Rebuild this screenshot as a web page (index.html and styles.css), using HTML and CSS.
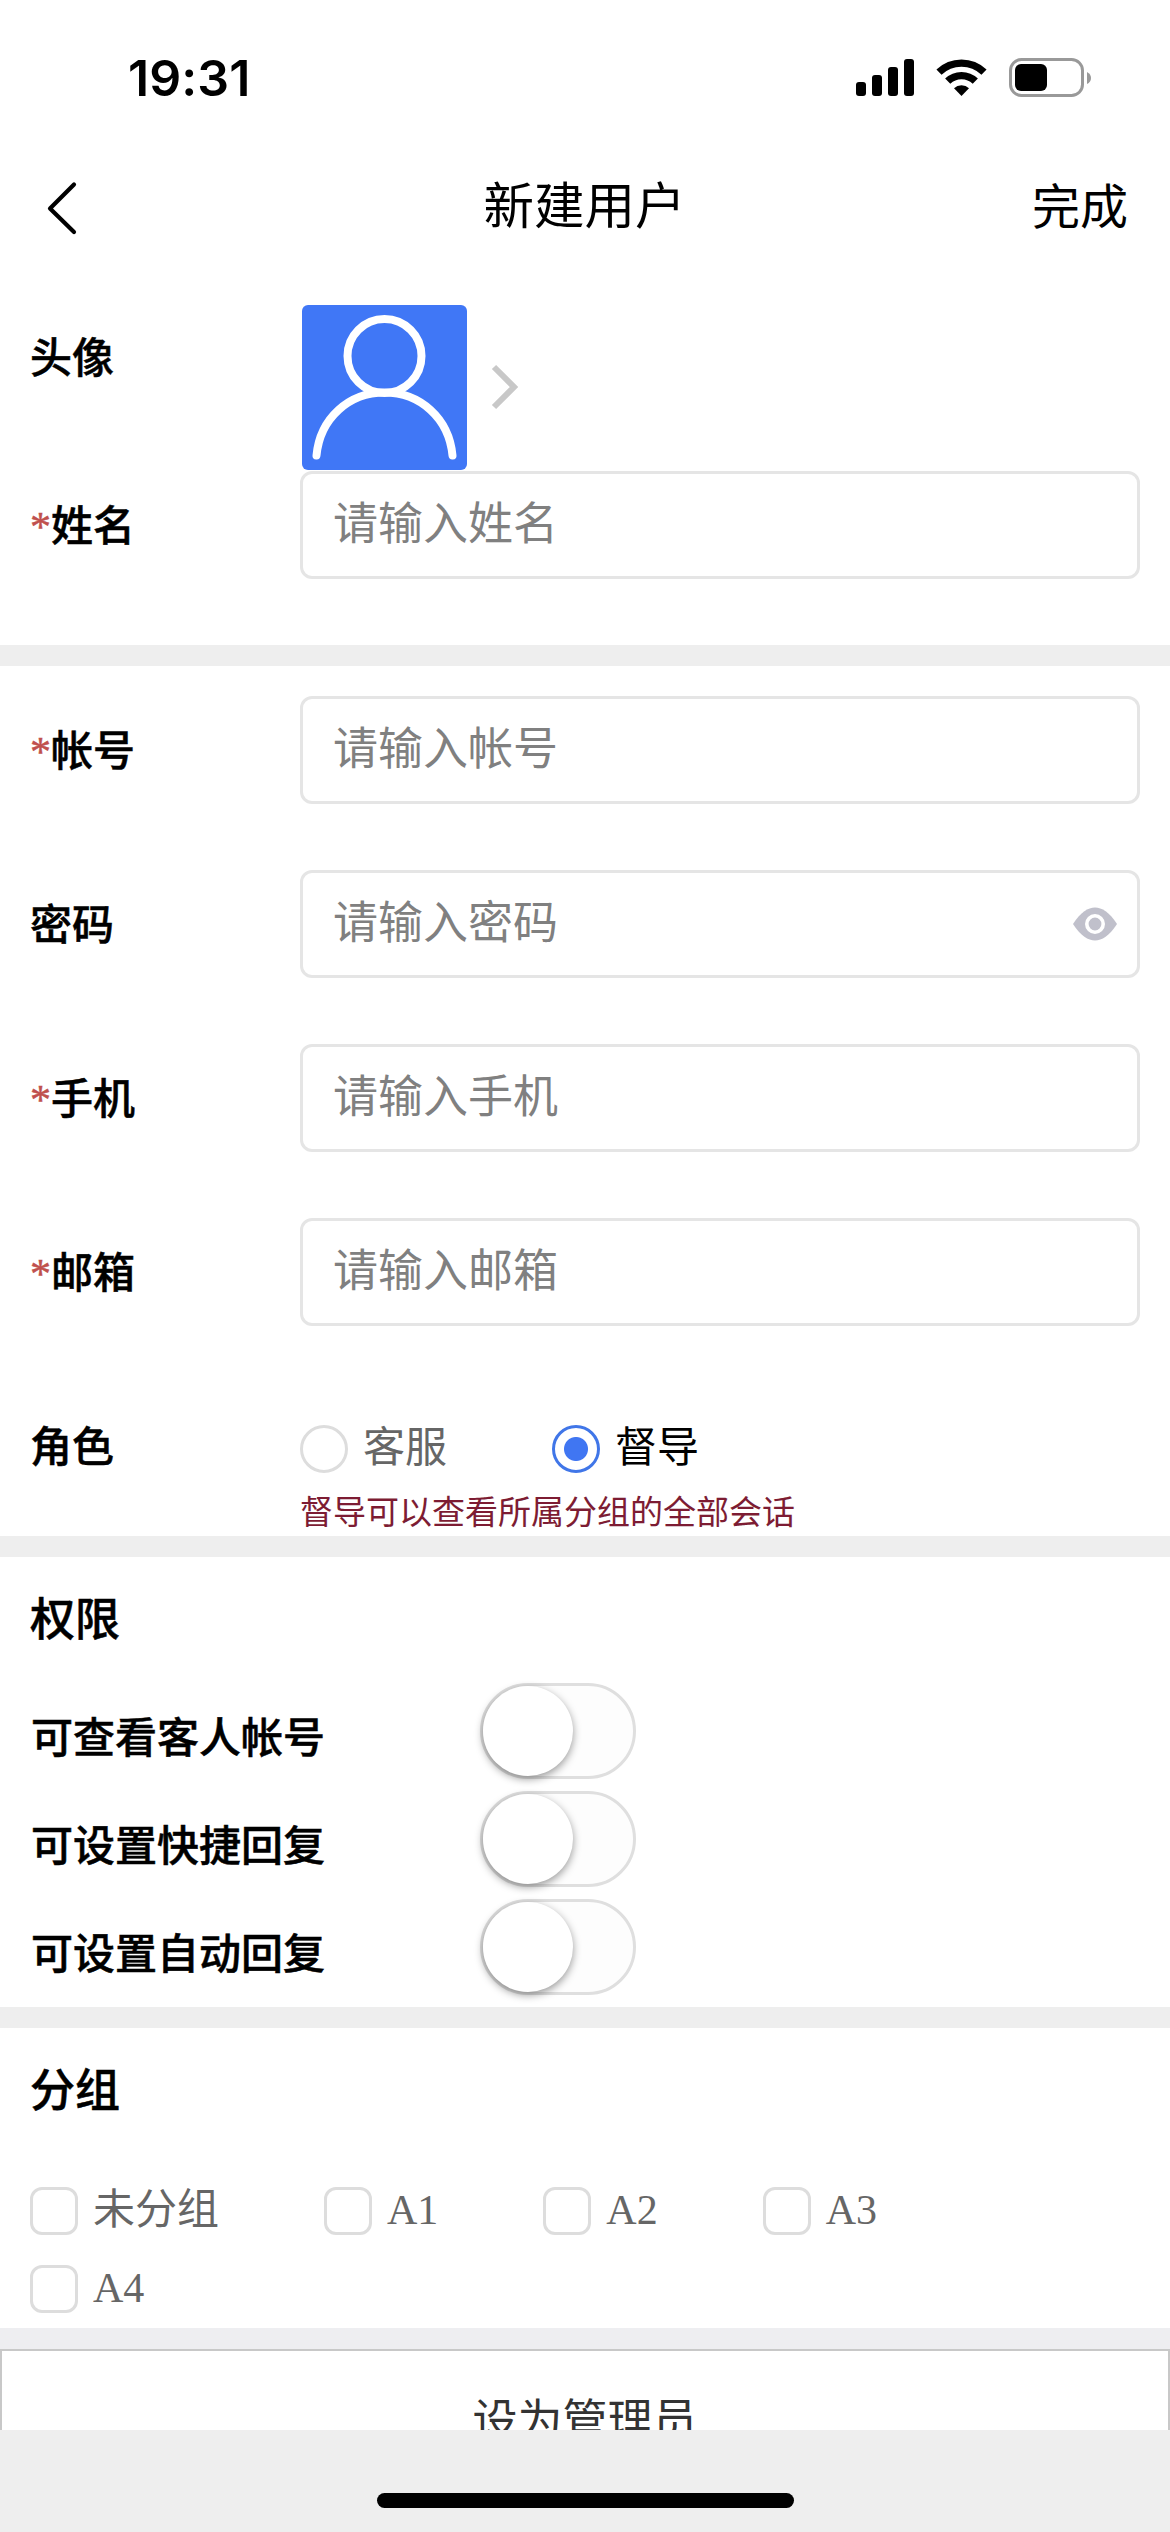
FILE: index.html
```html
<!DOCTYPE html>
<html lang="zh-CN">
<head>
<meta charset="utf-8">
<title>新建用户</title>
<link rel="stylesheet" href="styles.css">
</head>
<body>
<div class="screen">
  <div class="status">
    <span class="time">19:31</span>
    <svg class="status-icons" width="240" height="44" viewBox="854 56 240 44">
      <rect x="856" y="82" width="10" height="14" rx="3"/>
      <rect x="872" y="75" width="10" height="21" rx="3"/>
      <rect x="888" y="67" width="10" height="29" rx="3"/>
      <rect x="904" y="59" width="10" height="37" rx="3"/>
      <g fill="none" stroke="#000" stroke-width="7.4">
        <path d="M939 72.2a32.500 32.500 0 0 1 45 0"/>
        <path d="M947.700 81.200a19.800 19.800 0 0 1 27.600 0"/>
      </g>
      <path d="M954 88.200a11 11 0 0 1 15 0l-7.500 7.800z"/>
      <rect x="1010.500" y="59.500" width="72" height="36" rx="11" fill="none" stroke="#999" stroke-width="3"/>
      <rect x="1015" y="64" width="32" height="27" rx="6"/>
      <path d="M1087 72v12q4-2 4-6t-4-6z" fill="#999"/>
    </svg>
  </div>

  <header class="nav">
    <svg class="back" width="30" height="54" viewBox="0 0 30 54"><path d="M27 3.500L3 27.500L27 51" fill="none" stroke="#000" stroke-width="4.200" stroke-linecap="round" stroke-linejoin="round"/></svg>
    <h1 class="title">新建用户</h1>
    <span class="done">完成</span>
  </header>

  <section class="section profile">
    <div class="row avatar-row">
      <span class="label">头像</span>
      <svg class="avatar" width="165" height="165" viewBox="302 305 165 165">
        <rect x="302" y="305" width="165" height="165" rx="6" fill="#4077f6"/>
        <g fill="none" stroke="#fff" stroke-width="8" stroke-linecap="round">
          <circle cx="384.500" cy="356" r="37"/>
          <path d="M316.500 455.500C320 418 349 392.500 384.500 392.500S449 418 452.500 455.500"/>
        </g>
      </svg>
      <svg class="chevron" width="30" height="48" viewBox="0 0 30 48"><path d="M4 4L24 24L4 44" fill="none" stroke="#c8c8c8" stroke-width="6"/></svg>
    </div>
    <div class="row"><span class="label"><i class="star">*</i>姓名</span><div class="field">请输入姓名</div></div>
  </section>

  <section class="section account">
    <div class="row"><span class="label"><i class="star">*</i>帐号</span><div class="field">请输入帐号</div></div>
    <div class="row"><span class="label">密码</span><div class="field">请输入密码
      <svg class="eye" width="44" height="34" viewBox="0 0 44 34"><path d="M0 17C8 5 15 .5 22 .5S36 5 44 17C36 29 29 33.500 22 33.500S8 29 0 17z" fill="#c0c0cb"/><circle cx="22" cy="17" r="8.200" fill="none" stroke="#fff" stroke-width="3.600"/></svg>
    </div></div>
    <div class="row"><span class="label"><i class="star">*</i>手机</span><div class="field">请输入手机</div></div>
    <div class="row"><span class="label"><i class="star">*</i>邮箱</span><div class="field">请输入邮箱</div></div>
    <div class="row role-row">
      <span class="label">角色</span>
      <div class="roles">
        <span class="option"><i class="radio"></i>客服</span>
        <span class="option selected"><i class="radio"></i>督导</span>
      </div>
    </div>
    <p class="hint">督导可以查看所属分组的全部会话</p>
  </section>

  <section class="section rights">
    <h2 class="heading">权限</h2>
    <div class="switch-row"><span>可查看客人帐号</span><i class="switch"></i></div>
    <div class="switch-row"><span>可设置快捷回复</span><i class="switch"></i></div>
    <div class="switch-row"><span>可设置自动回复</span><i class="switch"></i></div>
  </section>

  <section class="section groups">
    <h2 class="heading">分组</h2>
    <div class="checks">
      <span class="check"><i class="box"></i>未分组</span>
      <span class="check"><i class="box"></i>A1</span>
      <span class="check"><i class="box"></i>A2</span>
      <span class="check"><i class="box"></i>A3</span>
      <span class="check"><i class="box"></i>A4</span>
    </div>
  </section>

  <div class="admin"><span>设为管理员</span></div>
  <footer class="home"><i class="home-bar"></i></footer>
</div>
</body>
</html>
```

FILE: styles.css
```css
* { box-sizing: border-box; }
body { margin: 0; background: #eee; }
i { font-style: normal; }
svg { display: block; flex: none; }

.screen {
  width: 1170px;
  height: 2532px;
  overflow: hidden;
  display: flex;
  flex-direction: column;
  background: #fff;
  color: #000;
  font-family: "Liberation Serif", "Noto Sans CJK SC", sans-serif;
  font-size: 42px;
  line-height: 60px;
}
.screen > * { flex: none; }

.status {
  height: 156px;
  padding: 0 76px 0 128px;
  display: flex;
  justify-content: space-between;
}
.time {
  padding-top: 48px;
  font: 600 50px/60px Inter, sans-serif;
  letter-spacing: 0.1px;
}
.status-icons { margin-top: 56px; }

.nav {
  height: 149px;
  padding: 0 42px 0 47px;
  display: grid;
  grid-template-columns: 200px 1fr 206px;
  align-items: start;
}
.back { margin-top: 25px; }
.title {
  margin: 15px 0 0;
  font-size: 50.5px;
  font-weight: 400;
  line-height: 72px;
  text-align: center;
}
.done {
  margin-top: 16px;
  font-size: 48px;
  line-height: 72px;
  text-align: right;
}

.section { border-bottom: 21px solid #eee; }
.row {
  height: 108px;
  flex: none;
  padding: 0 30px;
  display: flex;
}
.label {
  width: 270px;
  flex: none;
  padding-top: 26px;
  font-weight: 500;
  -webkit-text-stroke: 0.5px currentColor;
}
.avatar-row .label { padding-top: 24px; }
.star {
  color: #c0504d;
  font-weight: 400;
}
.field {
  flex: 1;
  display: flex;
  justify-content: space-between;
  align-items: center;
  padding: 0 20px 1px 30px;
  border: 3px solid #e5e5e5;
  border-radius: 12px;
  color: #808080;
  font-size: 45px;
}
.eye { margin-top: 1px; }

.profile { height: 361px; }
.avatar-row { height: 166px; }
.avatar { margin-left: 2px; }
.chevron { margin: 58px 0 0 23px; }

.account {
  height: 891px;
  padding-top: 30px;
  display: flex;
  flex-direction: column;
}
.account .row { margin-bottom: 66px; }
.account .role-row { height: 98px; margin: 0; }
.roles { display: flex; gap: 105px; padding-top: 26px; }
.option {
  display: flex;
  gap: 15px;
  height: 60px;
  color: #666;
}
.option.selected { color: #000; }
.radio {
  width: 48px;
  height: 48px;
  margin-top: 7px;
  border: 3px solid #ddd;
  border-radius: 50%;
}
.selected .radio {
  border-color: #4076e8;
  background: radial-gradient(circle, #4076f2 11.5px, #fff 12.5px);
}
.hint {
  flex: none;
  margin: 0 0 0 300px;
  color: #7d1c33;
  font-size: 33px;
  line-height: 46px;
}

.heading {
  margin: 0;
  padding-left: 30px;
  font-size: 45px;
  font-weight: 500;
  line-height: 66px;
  -webkit-text-stroke: 0.5px currentColor;
}
.rights { height: 471px; padding-top: 31px; }
.rights .heading { height: 95px; }
.switch-row {
  height: 108px;
  padding-left: 31px;
  display: flex;
  font-weight: 500;
}
.switch-row span {
  width: 449px;
  padding-top: 26px;
  -webkit-text-stroke: 0.5px currentColor;
}
.switch {
  width: 156px;
  height: 96px;
  border: 3px solid #dfdfdf;
  border-radius: 48px;
  background: #fdfdfd;
}
.switch::before {
  content: "";
  display: block;
  width: 90px;
  height: 90px;
  border-radius: 50%;
  background: #fff;
  box-shadow: 0 3px 9px rgba(0, 0, 0, .4);
}

.groups { height: 321px; padding-top: 31px; border-color: #eeeef1; }
.groups .heading { height: 121px; }
.checks {
  display: flex;
  flex-wrap: wrap;
  column-gap: 105px;
  padding: 0 135px 0 30px;
}
.check {
  height: 78px;
  display: flex;
  gap: 15px;
  color: #666;
}
.box {
  width: 48px;
  height: 48px;
  margin-top: 7px;
  border: 3px solid #ddd;
  border-radius: 12px;
}

.admin {
  height: 81px;
  padding-top: 38px;
  overflow: hidden;
  border: 2px solid #c8c8c8;
  border-bottom: 0;
  color: #333;
  font-size: 45px;
  line-height: 66px;
  text-align: center;
}
.home {
  height: 102px;
  padding-top: 63px;
  background: #eee;
}
.home-bar {
  display: block;
  width: 417px;
  height: 15px;
  margin: 0 auto;
  border-radius: 8px;
  background: #000;
}
```
